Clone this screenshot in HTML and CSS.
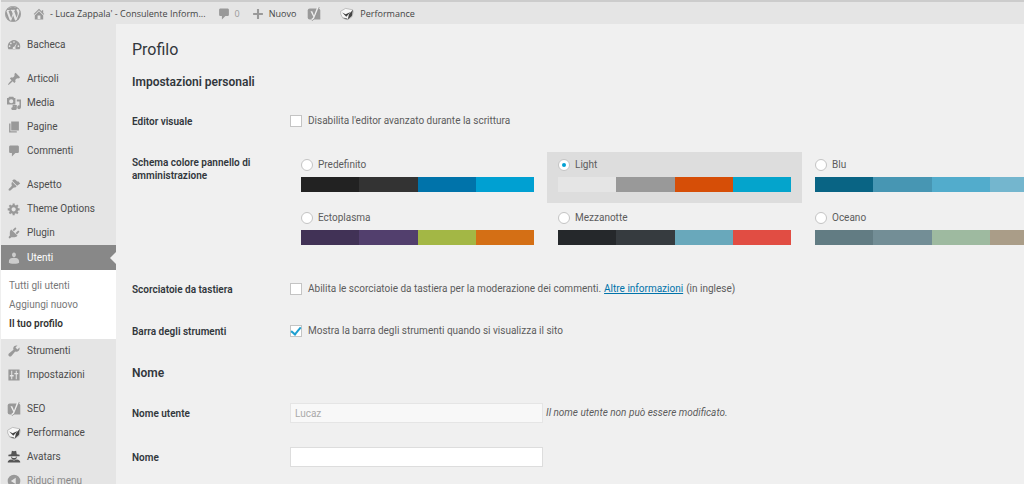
FILE: index.html
```html
<!DOCTYPE html>
<html lang="it">
<head>
<meta charset="utf-8">
<title>Profilo</title>
<link rel="stylesheet" href="styles.css">
</head>
<body>
<svg class="sprite" aria-hidden="true">
  <symbol id="i-comment" viewBox="0 0 20 20"><path d="M5 2h10c1.100 0 2 .9 2 2v7c0 1.100-.9 2-2 2h-3l-5 5v-5H5c-1.100 0-2-.9-2-2V4c0-1.100.9-2 2-2z"/></symbol>
  <symbol id="i-yoast" viewBox="0 0 20 20"><path d="M4 2h12a3 3 0 0 1 3 3v13H4a3 3 0 0 1-3-3V5a3 3 0 0 1 3-3z"/><path d="M5 6h2.500l2.500 6L14.500 0h3L11.500 14.500c-1 2.500-2.200 4-4.800 4v-2c1.500-.2 2.300-1.200 2.300-2.400z" fill="#eee"/><path d="M17.500 0l-6 14.500c-1 2.500-2.200 4-4.800 5.300" fill="none" stroke="#888"/></symbol>
  <symbol id="i-perf" viewBox="0 0 20 20"><path d="M1 6l7-4 10 2 1 3-2 7-6 4-7-2-3-6z" fill="#f8f8f8" stroke="#aaa"/><path d="M18.500 4L17 13l-6 5 2-8z" fill="#444"/><path d="M3 8l5 2.500 7-3.500-6 7z" fill="#444"/><path d="M4 15l3 2 4 1-1-2z" fill="#777"/></symbol>
</svg>
<header class="bar">
  <a class="bar-item" href="#" aria-label="WordPress"><svg class="wp" viewBox="0 0 20 20"><path d="M20 10a10 10 0 1 1-20 0 10 10 0 0 1 20 0zM10 1.010a8.990 8.990 0 1 0 0 17.980 8.990 8.990 0 0 0 0-17.980zM7.780 15.370L4.370 6.220c.55-.02 1.170-.08 1.170-.08.500-.06.440-1.130-.06-1.110 0 0-1.450.110-2.370.110-.18 0-.37 0-.58-.01C4.120 2.690 6.870 1.110 10 1.110c2.330 0 4.450.870 6.050 2.340-.68-.11-1.650.39-1.650 1.580 0 .74.450 1.360.9 2.100.350.610.550 1.360.550 2.460 0 1.490-1.400 5-1.400 5l-3.030-8.370c.54-.02.820-.17.820-.17.500-.05.440-1.250-.06-1.220 0 0-1.440.120-2.380.120-.87 0-2.330-.12-2.330-.12-.5-.03-.56 1.200-.06 1.220l.920.080 1.260 3.410zM17.410 10c.24-.64.740-1.870.430-4.250.7 1.290 1.050 2.710 1.050 4.250 0 3.290-1.730 6.240-4.400 7.780.97-2.590 1.940-5.200 2.920-7.780zM6.100 18.090C3.120 16.650 1.110 13.530 1.110 10c0-1.300.23-2.480.720-3.590C3.250 10.300 4.670 14.200 6.100 18.090zm4.030-6.630l2.580 6.980c-.86.290-1.760.450-2.710.450-.79 0-1.570-.11-2.290-.33.810-2.380 1.620-4.740 2.420-7.100z"/></svg></a>
  <a class="bar-item site" href="#"><svg class="ico" viewBox="0 0 20 20"><path d="M16 8.500l1.530 1.530-1.060 1.060L10 4.600l-6.470 6.500-1.060-1.070L10 2.500l4 4v-2h2v4zm-6-2.460l6 5.990V18H4v-5.970zM12 17v-5H8v5h4z"/></svg><span>- Luca Zappala' - Consulente Inform...</span></a>
  <a class="bar-item count" href="#"><svg class="ico"><use href="#i-comment"/></svg><span>0</span></a>
  <a class="bar-item" href="#"><svg class="ico" viewBox="0 0 20 20"><path d="M17 8.500v3h-5.500V17h-3v-5.500H3v-3h5.500V3h3v5.500z"/></svg><span>Nuovo</span></a>
  <a class="bar-item" href="#" aria-label="SEO"><svg class="ico"><use href="#i-yoast"/></svg></a>
  <a class="bar-item perf" href="#"><svg class="ico"><use href="#i-perf"/></svg><span>Performance</span></a>
</header>
<div class="shell">
  <nav class="menu">
    <a class="item" href="#"><svg class="ico" viewBox="0 0 20 20"><path fill-rule="evenodd" d="M10 3a9 9 0 0 0-8 13h16A9 9 0 0 0 10 3zm0 1.500a1.200 1.200 0 1 1 0 2.400 1.200 1.200 0 0 1 0-2.400zM5.500 6.500a1.200 1.200 0 1 1 0 2.400 1.200 1.200 0 0 1 0-2.400zM3.700 10.500a1.200 1.200 0 1 1 0 2.400 1.200 1.200 0 0 1 0-2.400zM14.500 6.500l-2.700 6.800a2 2 0 1 1-1.500-.8zM16.300 10.500a1.200 1.200 0 1 1 0 2.400 1.200 1.200 0 0 1 0-2.400z"/></svg>Bacheca</a>
    <div class="sep"></div>
    <a class="item" href="#"><svg class="ico" viewBox="0 0 20 20"><path d="M10.440 3.020l1.820-1.820 6.360 6.350-1.830 1.820c-1.050-.68-2.480-.57-3.410.360l-.75.750c-.92.930-1.040 2.350-.35 3.410l-1.830 1.820-2.410-2.410-2.800 2.790c-.42.420-3.380 2.710-3.800 2.290s1.860-3.390 2.280-3.810l2.790-2.790L4.100 9.360l1.830-1.820c1.050.69 2.480.57 3.400-.36l.75-.75c.93-.92 1.050-2.350.360-3.410z"/></svg>Articoli</a>
    <a class="item" href="#"><svg class="ico" viewBox="0 0 20 20"><path fill-rule="evenodd" d="M0 3h2l1-2h6l1 2h2v9H0zM6 4.500a3 3 0 1 0 0 6 3 3 0 0 0 0-6z"/><path d="M14 5h6v11a2.700 2.700 0 1 1-2.200-2.600V8H14zM8 13h6v4.500a2.500 2.500 0 1 1-2-2.400h-2v2.400A2 2 0 1 1 8 16z"/></svg>Media</a>
    <a class="item" href="#"><svg class="ico" viewBox="0 0 20 20"><path d="M6 15V2h11v13H6zm-1 1h9v2H3V5h2v11z"/></svg>Pagine</a>
    <a class="item" href="#"><svg class="ico"><use href="#i-comment"/></svg>Commenti</a>
    <div class="sep"></div>
    <a class="item" href="#"><svg class="ico" viewBox="0 0 20 20"><path d="M14.480 11.060L7.410 3.990l1.500-1.500c.5-.56 2.300-.47 3.510.320 1.210.8 1.430 1.280 2 2.100l1.500-.2 3 3zm-.71.710l-1.500 1.500c-.8.700-1.700-.2-3 .7-1.500 1.100-4 4.200-5 4.200-1.800 0-2.500-1.400-1.700-2.500.8-1 3.600-3.200 4.200-4.600.5-1.300-.9-2.200-.3-3.100L7.200 5.300z"/></svg>Aspetto</a>
    <a class="item" href="#"><svg class="ico" viewBox="0 0 20 20"><path fill-rule="evenodd" d="M18 12h-2.180c-.17.700-.44 1.350-.81 1.930l1.540 1.540-2.100 2.100-1.540-1.540c-.58.360-1.230.630-1.910.790V19H8v-2.180c-.68-.16-1.330-.43-1.910-.79l-1.540 1.540-2.120-2.120 1.540-1.540c-.36-.58-.63-1.230-.79-1.910H1V9.030h2.170c.16-.7.440-1.350.8-1.940L2.430 5.550l2.100-2.100 1.540 1.540c.58-.37 1.240-.64 1.930-.81V2h3v2.180c.68.160 1.330.430 1.910.790l1.540-1.540 2.120 2.120-1.540 1.540c.36.590.640 1.240.8 1.940H18V12zm-8.500 1.500c1.660 0 3-1.340 3-3s-1.340-3-3-3-3 1.340-3 3 1.340 3 3 3z"/></svg>Theme Options</a>
    <a class="item" href="#"><svg class="ico" viewBox="0 0 20 20"><path d="M13.110 4.360L9.870 7.600 8 5.730l3.240-3.240c.35-.34 1.050-.2 1.560.320.520.510.660 1.210.310 1.550zm-8 1.770l.91-1.120 9.010 9.010-1.190.84c-.71.710-2.630 1.160-3.820 1.160H6.140L4.900 17.260c-.59.590-1.540.590-2.120 0-.59-.58-.59-1.530 0-2.120l1.240-1.240v-3.880c0-1.130.4-3.190 1.090-3.890zm7.260 3.970l3.240-3.240c.34-.35 1.040-.21 1.550.310.520.510.660 1.210.310 1.550l-3.240 3.250z"/></svg>Plugin</a>
    <a class="item current" href="#"><svg class="ico" viewBox="0 0 20 20"><path d="M10 9.250c-2.270 0-2.730-3.440-2.730-3.440C7 4.020 7.820 2 9.970 2c2.160 0 2.980 2.020 2.710 3.810 0 0-.41 3.440-2.680 3.440zM12.720 10c2.390 0 4.520 2.330 4.520 4.530v2.490s-3.650 1.130-7.240 1.130c-3.650 0-7.240-1.130-7.240-1.130v-2.490c0-2.250 1.940-4.480 4.470-4.480z"/></svg>Utenti</a>
    <div class="submenu">
      <a href="#">Tutti gli utenti</a>
      <a href="#">Aggiungi nuovo</a>
      <a class="here" href="#">Il tuo profilo</a>
    </div>
    <a class="item" href="#"><svg class="ico" viewBox="0 0 20 20"><path d="M16.680 9.770c-1.340 1.340-3.300 1.670-4.950.99l-5.410 6.520c-.99.990-2.590.990-3.580 0s-.99-2.590 0-3.570l6.520-5.420c-.68-1.650-.35-3.610.99-4.950 1.280-1.280 3.120-1.620 4.720-1.060l-2.890 2.890 2.820 2.820 2.860-2.870c.53 1.580.180 3.390-1.080 4.650z"/></svg>Strumenti</a>
    <a class="item" href="#"><svg class="ico" viewBox="0 0 20 20"><path fill-rule="evenodd" d="M2 2h16v16H2zM6 4v6H4v2h2v4h1.500v-4h2v-2h-2V4zM12.500 4v3h-2v2h2v7H14V9h2V7h-2V4z"/></svg>Impostazioni</a>
    <div class="sep"></div>
    <a class="item" href="#"><svg class="ico"><use href="#i-yoast"/></svg>SEO</a>
    <a class="item" href="#"><svg class="ico"><use href="#i-perf"/></svg>Performance</a>
    <a class="item" href="#"><svg class="ico dark" viewBox="0 0 20 20"><path d="M7 1l3 .7L13 1l1 5 4 .8V9H2V6.800L6 6zM6 9.500h1.500v2h5v-2H14c0 2.500-1.500 4.500-4 4.500s-4-2-4-4.500zM1 18c0-3 2-4 5-4.500l4 1.500 4-1.500c3 .5 5 1.500 5 4.500z"/></svg>Avatars</a>
    <button class="item fold" type="button"><svg class="ico" viewBox="0 0 20 20"><path fill-rule="evenodd" d="M10 1a9 9 0 1 1 0 18 9 9 0 0 1 0-18zM12.500 5.500L5.500 10l7 4.500z"/></svg>Riduci menu</button>
  </nav>
  <main class="main">
    <h1>Profilo</h1>
    <form>
      <h2>Impostazioni personali</h2>
      <div class="row">
        <div class="head">Editor visuale</div>
        <label class="check"><input type="checkbox"><span>Disabilita l'editor avanzato durante la scrittura</span></label>
      </div>
      <div class="row colours">
        <div class="head" id="scheme">Schema colore pannello di amministrazione</div>
        <div class="schemes" role="radiogroup" aria-labelledby="scheme">
          <label class="scheme"><span class="name"><input type="radio" name="c">Predefinito</span><span class="swatch default"><i></i><i></i><i></i><i></i></span></label>
          <label class="scheme selected"><span class="name"><input type="radio" name="c" checked>Light</span><span class="swatch light"><i></i><i></i><i></i><i></i></span></label>
          <label class="scheme"><span class="name"><input type="radio" name="c">Blu</span><span class="swatch blue"><i></i><i></i><i></i><i></i></span></label>
          <label class="scheme"><span class="name"><input type="radio" name="c">Ectoplasma</span><span class="swatch ecto"><i></i><i></i><i></i><i></i></span></label>
          <label class="scheme"><span class="name"><input type="radio" name="c">Mezzanotte</span><span class="swatch midnight"><i></i><i></i><i></i><i></i></span></label>
          <label class="scheme"><span class="name"><input type="radio" name="c">Oceano</span><span class="swatch ocean"><i></i><i></i><i></i><i></i></span></label>
        </div>
      </div>
      <div class="row keys">
        <div class="head">Scorciatoie da tastiera</div>
        <div class="inline"><label class="check"><input type="checkbox"><span>Abilita le scorciatoie da tastiera per la moderazione dei commenti.</span></label><a href="#">Altre informazioni</a><span>(in inglese)</span></div>
      </div>
      <div class="row">
        <div class="head">Barra degli strumenti</div>
        <label class="check"><input type="checkbox" checked><span>Mostra la barra degli strumenti quando si visualizza il sito</span></label>
      </div>
      <h2>Nome</h2>
      <div class="row field">
        <label class="head" for="user">Nome utente</label>
        <div class="inline"><input class="text" id="user" type="text" value="Lucaz" disabled><em>Il nome utente non può essere modificato.</em></div>
      </div>
      <div class="row field">
        <label class="head" for="name">Nome</label>
        <div class="inline"><input class="text" id="name" type="text"></div>
      </div>
    </form>
  </main>
</div>
</body>
</html>
```
FILE: styles.css
```css
* { box-sizing: border-box; }
body {
  margin: 0;
  height: 100vh;
  overflow: hidden;
  display: flex;
  flex-direction: column;
  background: #f0f0f0;
  color: #5c5c5c;
  font: 10px/14px Roboto, "Open Sans", sans-serif;
  border-left: 1px solid #efefef;
}
a { color: inherit; text-decoration: none; }
svg { fill: #999; flex: none; }
.sprite { display: none; }
.ico { width: 14px; height: 14px; }
.dark { fill: #555; }

.bar {
  flex: none;
  height: 24px;
  display: flex;
  align-items: center;
  gap: 11px;
  padding: 1px 4px 0;
  background: #e5e5e5;
  border-top: 2px solid #ccc;
  color: #444;
  font-family: "Open Sans", "Noto Sans", sans-serif;
  font-size: 9px;
}
.bar-item { display: flex; align-items: center; gap: 4px; }
.wp { width: 16px; height: 16px; }
.count { color: #999; }
.perf { margin-left: 8px; gap: 6px; }

.shell { flex: 1; min-height: 0; display: flex; }
.menu {
  flex: none;
  width: 115px;
  padding-top: 9px;
  background: #e5e5e5;
  overflow: hidden;
}
.item {
  position: relative;
  display: flex;
  align-items: center;
  gap: 6px;
  width: 100%;
  height: 24px;
  padding: 0 6px;
  border: 0;
  background: none;
  color: #4c4c4c;
  font: inherit;
}
.sep { height: 10px; }
.current { height: 25px; background: #888; color: #fff; }
.current svg { fill: #ccc; }
.current::after {
  content: "";
  position: absolute;
  right: 0;
  top: 7px;
  border: 6px solid transparent;
  border-left: 0;
  border-right-color: #f0f0f0;
}
.submenu {
  display: grid;
  gap: 5px;
  padding: 9px 8px 8px;
  background: #fff;
  color: #777;
}
.here { color: #333; font-weight: 600; }
.fold { color: #888; }

.main { flex: 1; min-width: 0; padding: 15px 0 0 16px; overflow: hidden; }
h1 { margin: 0; font-size: 16px; line-height: 22px; font-weight: 400; color: #32373c; }
h2 { margin: 12px 0 9px; font-size: 12px; line-height: 18px; font-weight: 600; color: #32373c; }
.row { display: grid; grid-template-columns: 158px 1fr; align-items: center; min-height: 42px; }
.head { color: #32373c; font-weight: 600; line-height: 13px; }
.check, .inline { display: flex; align-items: center; gap: 6px; }
.inline { gap: 3px; }
.inline a { color: #0073aa; text-decoration: underline; }

input[type="checkbox"], input[type="radio"] {
  appearance: none;
  flex: none;
  display: grid;
  place-items: center;
  width: 12px;
  height: 12px;
  margin: 0;
  border: 1px solid #c4c4c4;
  background: #fff;
}
input[type="radio"] { border-radius: 50%; }
input[type="radio"]:checked::before { content: ""; width: 4px; height: 4px; border-radius: 50%; background: #00a0d2; }
input[type="checkbox"]:checked::before {
  content: "";
  width: 8px;
  height: 4px;
  margin-bottom: 2px;
  border: solid #1e9fd0;
  border-width: 0 0 2px 2px;
  transform: rotate(-50deg);
}

.colours { align-items: start; }
.colours .head { padding: 14px 20px 0 0; }
.schemes { display: grid; grid-template-columns: repeat(3, 255px); gap: 2px; padding-top: 10px; }
.scheme { display: grid; gap: 5px; padding: 6px 11px 11px; }
.selected { background: #ddd; }
.name { display: flex; align-items: center; gap: 5px; }
.swatch { display: grid; grid-template-columns: repeat(4, 1fr); height: 15px; }
.default i:nth-child(1) { background: #222; }
.default i:nth-child(2) { background: #333; }
.default i:nth-child(3) { background: #0073aa; }
.default i:nth-child(4) { background: #00a0d2; }
.light i:nth-child(1) { background: #e5e5e5; }
.light i:nth-child(2) { background: #999; }
.light i:nth-child(3) { background: #d64e07; }
.light i:nth-child(4) { background: #04a4cc; }
.blue i:nth-child(1) { background: #096484; }
.blue i:nth-child(2) { background: #4796b3; }
.blue i:nth-child(3) { background: #52accc; }
.blue i:nth-child(4) { background: #74b6ce; }
.ecto i:nth-child(1) { background: #413256; }
.ecto i:nth-child(2) { background: #523f6d; }
.ecto i:nth-child(3) { background: #a3b745; }
.ecto i:nth-child(4) { background: #d46f15; }
.midnight i:nth-child(1) { background: #25282b; }
.midnight i:nth-child(2) { background: #363b3f; }
.midnight i:nth-child(3) { background: #69a8bb; }
.midnight i:nth-child(4) { background: #e14d43; }
.ocean i:nth-child(1) { background: #627c83; }
.ocean i:nth-child(2) { background: #738e96; }
.ocean i:nth-child(3) { background: #9ebaa0; }
.ocean i:nth-child(4) { background: #aa9d88; }

.keys { margin-top: 12px; }
.text {
  width: 253px;
  height: 20px;
  margin: 0;
  padding: 0 4px;
  border: 1px solid #ddd;
  background: #fff;
  color: #555;
  font: inherit;
}
.text:disabled { border-color: #e5e5e5; background: #f8f8f8; color: #aaa; }
.field { min-height: 44px; }
```
